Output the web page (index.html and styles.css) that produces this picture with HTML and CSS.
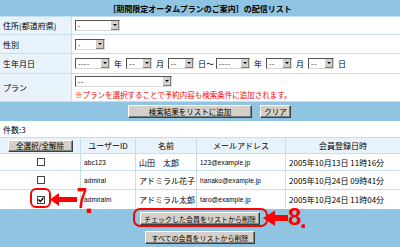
FILE: index.html
```html
<!DOCTYPE html>
<html lang="ja">

<head>
    <meta charset="UTF-8">
    <meta name="viewport" content="width=device-width, initial-scale=1.0">
    <title>配信リスト</title>
    <link rel="stylesheet" href="styles.css">
</head>

<body>
    <div class="page">
        <div class="search">
            <div class="title">［期間限定オータムプランのご案内］の配信リスト</div>

            <div class="label">住所(都道府県)</div>
            <div class="value">
                <span class="sel w45"><span class="txt">-</span><span class="arr"></span></span>
            </div>

            <div class="label">性別</div>
            <div class="value">
                <span class="sel w30"><span class="txt">-</span><span class="arr"></span></span>
            </div>

            <div class="label">生年月日</div>
            <div class="value">
                <span class="sel w35"><span class="txt">----</span><span class="arr"></span></span>
                <span>年</span>
                <span class="sel w26"><span class="txt">--</span><span class="arr"></span></span>
                <span>月</span>
                <span class="sel w26"><span class="txt">--</span><span class="arr"></span></span>
                <span class="tilde">日～</span>
                <span class="sel w34"><span class="txt">----</span><span class="arr"></span></span>
                <span>年</span>
                <span class="sel w26"><span class="txt">--</span><span class="arr"></span></span>
                <span>月</span>
                <span class="sel w26"><span class="txt">--</span><span class="arr"></span></span>
                <span>日</span>
            </div>

            <div class="label">プラン</div>
            <div class="value plan">
                <span class="sel w97"><span class="txt">--</span><span class="arr"></span></span>
                <span class="note">※プランを選択することで予約内容も検索条件に追加されます。</span>
            </div>

            <div class="actions">
                <button class="btn btn-add">検索結果をリストに追加</button>
                <button class="btn btn-clear">クリア</button>
            </div>
        </div>

        <div class="count">件数:3</div>

        <div class="list">
            <div class="head"><button class="btn btn-all">全選択/全解除</button></div>
            <div class="head">ユーザーID</div>
            <div class="head">名前</div>
            <div class="head">メールアドレス</div>
            <div class="head">会員登録日時</div>

            <div class="cell center"><span class="chk"></span></div>
            <div class="cell ascii">abc123</div>
            <div class="cell">山田　太郎</div>
            <div class="cell ascii">123@example.jp</div>
            <div class="cell">2005年10月13日 11時16分</div>

            <div class="cell center"><span class="chk"></span></div>
            <div class="cell ascii">admiral</div>
            <div class="cell">アドミラル花子</div>
            <div class="cell ascii">hanako@example.jp</div>
            <div class="cell">2005年10月24日 09時41分</div>

            <div class="cell center">
                <span class="chk">
                    <svg width="6" height="6" viewBox="0 0 6 6"><path d="M0.5 2.5 L2.3 4.5 L5.5 0.8" fill="none" stroke="#000" stroke-width="1.3"/></svg>
                </span>
            </div>
            <div class="cell ascii">admiralm</div>
            <div class="cell">アドミラル太郎</div>
            <div class="cell ascii">taro@example.jp</div>
            <div class="cell">2005年10月24日 11時04分</div>
        </div>

        <div class="bottom">
            <button class="btn btn-del">チェックした会員をリストから削除</button>
            <button class="btn btn-delall">すべての会員をリストから削除</button>
        </div>

        <!-- red callouts 7. / 8. -->
        <svg class="notes" width="400" height="247" viewBox="0 0 400 247">
            <rect x="31" y="189" width="19" height="18" rx="5" fill="none" stroke="#f00" stroke-width="2"/>
            <polygon points="50,199.5 59,193 59,197 77,197 77,202 59,202 59,206" fill="#f00"/>
            <text class="num" x="77" y="208" textLength="10" lengthAdjust="spacingAndGlyphs">7</text>
            <text class="num" x="85" y="213">.</text>

            <rect x="134" y="209" width="133" height="17" rx="6" fill="none" stroke="#f00" stroke-width="2"/>
            <polygon points="263,218 275,210.5 275,215 288,215 288,221 275,221 275,226" fill="#f00"/>
            <text class="num small" x="288" y="225">8</text>
            <text class="num small" x="300" y="228">.</text>
        </svg>
    </div>
</body>

</html>
```

FILE: styles.css
```css
body {
    margin: 0;
    font-family: "Noto Sans CJK JP", sans-serif;
    font-size: 8px;
    color: #000;
    background: #fff;
}

.page {
    position: relative;
    width: 400px;
    height: 247px;
    overflow: hidden;
}

/* search form */
.search {
    display: grid;
    grid-template-columns: 71px 1fr;
    grid-template-rows: 16px 17px 18px 19px 27px 19px;
    gap: 1px;
    background: #c4dff1;
}

.title {
    grid-column: span 2;
    background: #8fc4e2;
    font-weight: bold;
    display: flex;
    align-items: center;
    justify-content: center;
}

.label {
    background: #e8f2fb;
    padding-left: 3px;
    display: flex;
    align-items: center;
}

.value {
    background: #fff;
    padding-left: 3px;
    display: flex;
    align-items: center;
    gap: 4px;
}

.value .tilde {
    margin-right: -2px;
}

.value.plan {
    flex-direction: column;
    align-items: flex-start;
    justify-content: flex-start;
    padding-top: 2px;
    gap: 3px;
}

.note {
    color: #f00;
    font-size: 7.5px;
    line-height: 9px;
}

.sel {
    display: inline-flex;
    box-sizing: border-box;
    height: 11px;
    border: 1px solid;
    border-color: #555 #d8d8d8 #d8d8d8 #555;
    background: #fff;
    font-size: 7px;
    line-height: 9px;
}

.sel .txt {
    flex: 1;
    padding-left: 2px;
    letter-spacing: 0.5px;
}

.sel .arr {
    position: relative;
    width: 8px;
    background: #d4d0c8;
    border-left: 1px solid #fff;
    box-shadow: inset -1px -1px #808080;
}

.sel .arr::after {
    content: "";
    position: absolute;
    left: 2px;
    top: 3px;
    border-left: 2px solid transparent;
    border-right: 2px solid transparent;
    border-top: 2px solid #000;
}

.w45 { width: 45px; }
.w30 { width: 30px; }
.w35 { width: 35px; }
.w34 { width: 34px; }
.w26 { width: 26px; }
.w97 { width: 97px; }

.actions {
    grid-column: span 2;
    background: #8fc4e2;
    display: flex;
    align-items: center;
    padding-left: 128px;
    gap: 8px;
}

.btn {
    box-sizing: border-box;
    height: 13px;
    padding: 0;
    font-family: inherit;
    font-size: 7.5px;
    line-height: 10px;
    color: #000;
    background: #d4d0c8;
    border: 1px solid;
    border-color: #fff #404040 #404040 #fff;
    box-shadow: inset -1px -1px #808080;
    white-space: nowrap;
}

.btn-add { width: 124px; }
.btn-clear { width: 31px; }
.btn-all { width: 65px; height: 12px; }
.btn-del { width: 120px; font-size: 7px; }
.btn-delall { width: 110px; font-size: 7px; }

.count {
    height: 16px;
    padding-left: 3px;
    display: flex;
    align-items: center;
}

/* member list */
.list {
    display: grid;
    grid-template-columns: 80px 54px 60px 88px 1fr;
    grid-template-rows: 15px 16px 18px 19px;
    gap: 1px;
    padding-top: 1px;
    background: #c4dff1;
}

.head {
    background: #e8f2fb;
    display: flex;
    align-items: center;
    justify-content: center;
    white-space: nowrap;
}

.cell {
    background: #fff;
    padding: 0 2px 0 3px;
    display: flex;
    align-items: center;
    white-space: nowrap;
    overflow: hidden;
}

.cell.center {
    justify-content: center;
}

.cell.ascii {
    font-family: "Liberation Sans", sans-serif;
    font-size: 6.5px;
    letter-spacing: 0.1px;
}

.chk {
    box-sizing: border-box;
    width: 8px;
    height: 8px;
    border: 1px solid #444;
    background: #fff;
    display: flex;
    align-items: center;
    justify-content: center;
}

.bottom {
    height: 40px;
    background: #8fc4e2;
    display: flex;
    flex-direction: column;
    align-items: center;
    padding-top: 3px;
    gap: 6px;
}

.notes {
    position: absolute;
    left: 0;
    top: 0;
    pointer-events: none;
}

.notes .num {
    font-family: "Liberation Sans", sans-serif;
    font-weight: bold;
    font-size: 29px;
    fill: #f00;
}

.notes .num.small {
    font-size: 24px;
}
```
